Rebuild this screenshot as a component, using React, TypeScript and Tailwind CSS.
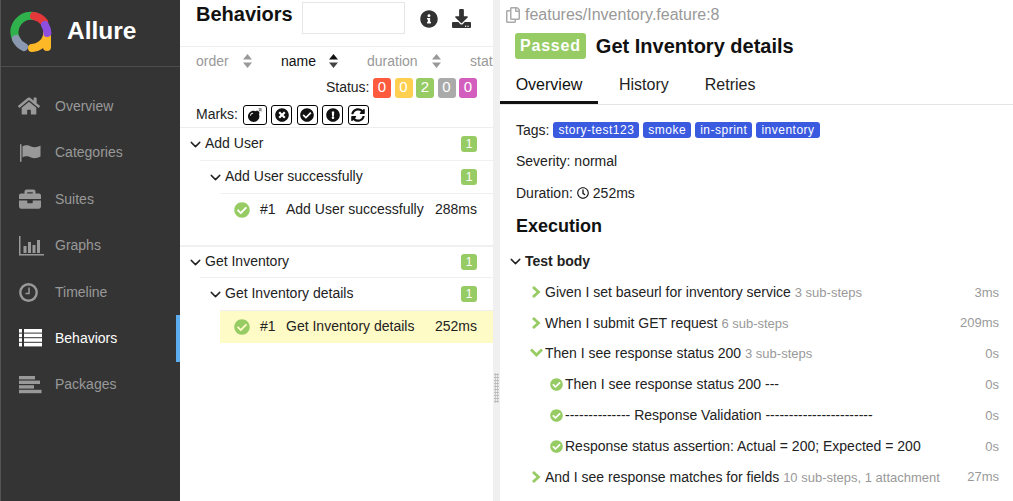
import React from 'react';
import {
  FaBomb,
  FaBriefcase,
  FaCheckCircle,
  FaDownload,
  FaExclamationCircle,
  FaHome,
  FaInfoCircle,
  FaRegClock,
  FaSyncAlt,
  FaTimesCircle,
  FaRegCopy,
} from 'react-icons/fa';
import { FiChevronDown } from 'react-icons/fi';

const FlagIcon = () => (
  <svg width="22" height="18" viewBox="0 0 22 18" fill="currentColor">
    <rect x="1" y="0" width="1.500" height="18" rx="0.7" />
    <path d="M3.500 2.500C7 0.500 9.500 1.500 12 2.500C15 3.500 18 3.500 21.500 1.500V12.500C18 14.500 15 14.500 12 13.500C9.500 12.500 7 11.500 3.500 13.500Z" />
  </svg>
);

const GraphIcon = () => (
  <svg width="25" height="20" viewBox="0 0 25 20" fill="currentColor">
    <rect x="0" y="0" width="1.500" height="19" />
    <rect x="0" y="18" width="25" height="1.500" />
    <rect x="4.500" y="10" width="3" height="7" />
    <rect x="9" y="6" width="3" height="11" />
    <rect x="13.500" y="9" width="3" height="8" />
    <rect x="18" y="4" width="3" height="13" />
  </svg>
);

const ClockIcon = () => (
  <svg width="19" height="19" viewBox="0 0 19 19" fill="none" stroke="currentColor">
    <circle cx="9.500" cy="9.500" r="8.200" strokeWidth="2.400" />
    <path d="M10 4.500V10.500H6.500" strokeWidth="1.500" />
  </svg>
);

const ListIcon = () => (
  <svg width="23" height="18" viewBox="0 0 23 18" fill="currentColor">
    {[0, 4.6, 9.2, 13.8].map((y) => (
      <g key={y}>
        <rect x="0" y={y} width="3" height="3.600" />
        <rect x="5" y={y} width="18" height="3.600" />
      </g>
    ))}
  </svg>
);

const PackagesIcon = () => (
  <svg width="23" height="18" viewBox="0 0 23 18" fill="currentColor">
    <rect x="0" y="0" width="16" height="3.400" />
    <rect x="0" y="4.600" width="21" height="3.400" />
    <rect x="0" y="9.200" width="15" height="3.400" />
    <rect x="0" y="13.800" width="22.500" height="3.400" />
  </svg>
);

const HomeIcon = () => <FaHome className="ml-[-1px] text-[22px]" />;
const SuitesIcon = () => <FaBriefcase className="text-[22px]" />;

const navItems = [
  { label: 'Overview', icon: HomeIcon },
  { label: 'Categories', icon: FlagIcon },
  { label: 'Suites', icon: SuitesIcon },
  { label: 'Graphs', icon: GraphIcon },
  { label: 'Timeline', icon: ClockIcon },
  { label: 'Behaviors', icon: ListIcon, active: true },
  { label: 'Packages', icon: PackagesIcon },
];

const Logo = () => (
  <svg width="42" height="42" viewBox="0 0 42 42" fill="none" strokeWidth="8" strokeLinecap="round">
    <path d="M24 5A16.500 16.500 0 0 0 6 28" stroke="#2fb24c" />
    <path d="M24 5A16.500 16.500 0 0 1 34 11" stroke="#e5383b" />
    <path d="M6 28A16.500 16.500 0 0 0 14 36" stroke="#8a99b0" />
    <path d="M37 23V36" stroke="#fdb827" />
    <path d="M37 25A16.500 16.500 0 0 1 22 37" stroke="#fdb827" />
    <path d="M35 14A16.500 16.500 0 0 1 37.400 22" stroke="#8e4fe0" />
  </svg>
);

const Sort = ({ active }: { active?: boolean }) => (
  <svg width="9" height="14" viewBox="0 0 9 14" className="shrink-0">
    <path d="M4.500 0L9 5.500H0Z" fill={active ? '#111' : '#999'} />
    <path d="M4.500 14L9 8.500H0Z" fill={active ? '#444' : '#999'} />
  </svg>
);

const Count = ({ n, color }: { n: number; color: string }) => (
  <span className={`flex h-5 w-[18px] items-center justify-center rounded-[3px] text-[15px] text-white ${color}`}>{n}</span>
);

const Mark = ({ children, wide }: { children: React.ReactNode; wide?: boolean }) => (
  <span
    className={`flex h-[20px] items-center justify-center rounded-[3px] border border-black text-[14px] text-[#111] ${
      wide ? 'w-[24px]' : 'w-[21px]'
    }`}
  >
    {children}
  </span>
);

const TreeRow = ({ label, height }: { label: string; height: string }) => (
  <div className={`flex items-center pl-[11px] pr-[16px] ${height}`}>
    <FiChevronDown className="ml-[-4px] mr-[1px] text-[17px] text-[#222]" />
    <span className="mb-[2px] flex-1">{label}</span>
    <span className="flex h-[16px] w-[16px] items-center justify-center rounded-[3px] bg-[#97cc64] text-[12px] text-white">1</span>
  </div>
);

const LeafRow = ({ name, time, selected }: { name: string; time: string; selected?: boolean }) => (
  <div className={`ml-[40px] flex h-[32px] items-center pr-[16px] ${selected ? 'bg-[#fffbc7]' : ''}`}>
    <FaCheckCircle className="ml-[14px] text-[16px] text-[#97cc64]" />
    <span className="mb-[2px] ml-[10px] w-[26px]">#1</span>
    <span className="mb-[2px] flex-1">{name}</span>
    <span className="mb-[2px]">{time}</span>
  </div>
);

const Step = ({
  kind,
  label,
  meta,
  time,
}: {
  kind: 'closed' | 'open' | 'pass';
  label: string;
  meta?: string;
  time: string;
}) => (
  <div className={`flex h-[30.8px] items-center pr-[14px] ${kind === 'pass' ? 'pl-[50px]' : 'pl-[30px]'}`}>
    {kind === 'closed' && (
      <svg width="15" height="12" viewBox="0 0 15 12" fill="none" stroke="#97cc64" strokeWidth="2.800" className="shrink-0">
        <path d="M3 1L8.500 6L3 11" />
      </svg>
    )}
    {kind === 'open' && (
      <svg width="15" height="9" viewBox="0 0 15 9" fill="none" stroke="#97cc64" strokeWidth="2.800" className="mb-[3px] shrink-0">
        <path d="M1 1.500L6.500 7L12 1.500" />
      </svg>
    )}
    {kind === 'pass' && <FaCheckCircle className="mr-[2px] w-[13px] shrink-0 text-[13px] text-[#97cc64]" />}
    <span className="flex-1 whitespace-pre text-[#222]">
      {label} {meta && <span className="text-[13px] text-[#999]">{meta}</span>}
    </span>
    <span className="text-[13px] text-[#999]">{time}</span>
  </div>
);

export default function App() {
  return (
    <div className="flex h-[501px] w-[1013px] overflow-hidden bg-white font-['Liberation_Sans',Arial,sans-serif] text-[14px] text-[#222]">
      <aside className="w-[180px] shrink-0 border-l border-[#555] bg-[#343434]">
        <div className="flex h-[67px] items-center border-b border-[#4d4d4d] pb-[3px] pl-[9px]">
          <Logo />
          <span className="ml-[15px] text-[24.5px] font-bold text-white">Allure</span>
        </div>
        <nav className="pt-[16.3px]">
          {navItems.map(({ label, icon: Icon, active }) => (
            <div
              key={label}
              className={`flex h-[46.4px] items-center pl-[18px] ${
                active ? 'border-r-4 border-[#5badf0] text-white' : 'text-[#999]'
              }`}
            >
              <span className="flex w-[36px] shrink-0 items-center">
                <Icon />
              </span>
              <span className="text-[14px]">{label}</span>
            </div>
          ))}
        </nav>
      </aside>

      <section className="w-[313px] shrink-0 overflow-hidden">
        <div className="flex h-[47px] border-b border-[#eee] pl-[16px]">
          <h2 className="mt-[1px] w-[95px] shrink-0 text-[20px] font-bold leading-[26px] text-[#111]">Behaviors</h2>
          <div className="ml-[11px] mt-[2px] h-[32px] w-[103px] shrink-0 border border-[#e6e6e6]" />
          <FaInfoCircle className="ml-[15px] mt-[10px] shrink-0 text-[18px] text-[#333]" />
          <FaDownload className="ml-[14px] mt-[9px] shrink-0 text-[19px] text-[#333]" />
        </div>
        <div className="flex h-[27px] items-center overflow-hidden whitespace-nowrap pl-[16px] pt-[1px] text-[#999]">
          <span className="w-[47px] shrink-0">order</span>
          <Sort />
          <span className="ml-[29px] w-[48px] shrink-0 text-[#111]">name</span>
          <Sort active />
          <span className="ml-[29px] w-[65px] shrink-0">duration</span>
          <Sort />
          <span className="ml-[29px] shrink-0">status</span>
        </div>
        <div className="mt-[3px] flex items-center justify-end gap-[3.5px] pr-[16px]">
          <span>Status:</span>
          <Count n={0} color="bg-[#fd5a3e]" />
          <Count n={0} color="bg-[#ffd050]" />
          <Count n={2} color="bg-[#97cc64]" />
          <Count n={0} color="bg-[#aaaaaa]" />
          <Count n={0} color="bg-[#d35ebe]" />
        </div>
        <div className="mt-[5px] flex h-[23px] items-center gap-[4.5px] pl-[16px]">
          <span>Marks:</span>
          <Mark wide><FaBomb /></Mark>
          <Mark><FaTimesCircle /></Mark>
          <Mark><FaCheckCircle /></Mark>
          <Mark><FaExclamationCircle /></Mark>
          <Mark><FaSyncAlt /></Mark>
        </div>
        <div className="mt-[1px] border-t border-[#eee]">
          <TreeRow label="Add User" height="h-[32px]" />
          <div className="ml-[20px] border-t border-[#f0f0f0]">
            <TreeRow label="Add User successfully" height="h-[32px]" />
          </div>
          <div className="ml-[40px] border-t border-[#f0f0f0]" />
          <LeafRow name="Add User successfully" time="288ms" />
        </div>
        <div className="mt-[19px] border-t-2 border-[#f0f0f0]">
          <TreeRow label="Get Inventory" height="h-[30px]" />
          <div className="ml-[20px] border-t border-[#f0f0f0]">
            <TreeRow label="Get Inventory details" height="h-[32px]" />
          </div>
          <div className="ml-[40px] border-t border-[#f0f0f0]" />
          <LeafRow name="Get Inventory details" time="252ms" selected />
        </div>
      </section>

      <div className="flex w-[7px] shrink-0 items-center justify-center bg-[#f0f0f0] pt-[275px]">
        <div className="h-[30px] w-[5px] bg-[radial-gradient(#bbb_1px,transparent_1px)] bg-[length:2.5px_3px]" />
      </div>

      <main className="min-w-0 flex-1">
        <div className="flex h-[29px] items-center pl-[5px] text-[16px] text-[#999]">
          <FaRegCopy className="mr-[4px] text-[16px] text-[#aaa]" />
          features/Inventory.feature:8
        </div>
        <div className="mt-[2px] flex h-[30px] items-center pl-[15px]">
          <span className="rounded-[3px] bg-[#97cc64] px-[5px] py-[1px] text-[16px] font-bold tracking-[0.8px] text-white">Passed</span>
          <h1 className="ml-[10px] text-[20px] font-bold text-[#111]">Get Inventory details</h1>
        </div>
        <div className="mt-[8px] flex h-[36px] border-b border-[#e5e5e5] text-[16px]">
          <div className="flex w-[98px] items-center justify-center border-b-[3px] border-[#111] pb-[1px] text-[#111]">Overview</div>
          <div className="ml-[21px] flex items-center pb-[3px]">History</div>
          <div className="ml-[36px] flex items-center pb-[3px]">Retries</div>
        </div>
        <div className="mt-[9px] flex h-[32px] items-center pl-[16px]">
          <span className="mr-[4px]">Tags:</span>
          <div className="flex gap-[4px] text-[12px] leading-[16px] tracking-[0.5px] text-white">
            <span className="rounded-[3px] bg-[#3a5ae0] px-[5px]">story-test123</span>
            <span className="rounded-[3px] bg-[#3a5ae0] px-[5px]">smoke</span>
            <span className="rounded-[3px] bg-[#3a5ae0] px-[5px]">in-sprint</span>
            <span className="rounded-[3px] bg-[#3a5ae0] px-[5px]">inventory</span>
          </div>
        </div>
        <div className="flex h-[31px] items-center pl-[16px]">Severity: normal</div>
        <div className="flex h-[32px] items-center pl-[16px]">
          Duration:
          <FaRegClock className="mx-[4px] text-[12px] text-[#111]" />
          252ms
        </div>
        <h3 className="mt-[5px] pl-[16px] text-[18px] font-bold leading-[24px] text-[#111]">Execution</h3>
        <div className="mt-[11px] flex h-[25px] items-center pl-[7px] font-bold">
          <FiChevronDown className="mr-[1px] text-[17px]" />
          Test body
        </div>
        <div className="mt-[3px]">
          <Step kind="closed" label="Given I set baseurl for inventory service" meta="3 sub-steps" time="3ms" />
          <Step kind="closed" label="When I submit GET request" meta="6 sub-steps" time="209ms" />
          <Step kind="open" label="Then I see response status 200" meta="3 sub-steps" time="0s" />
          <Step kind="pass" label="Then I see response status 200 ---" time="0s" />
          <Step kind="pass" label="-------------- Response Validation -----------------------" time="0s" />
          <Step kind="pass" label="Response status assertion: Actual = 200; Expected = 200" time="0s" />
          <Step kind="closed" label="And I see response matches for fields" meta="10 sub-steps, 1 attachment" time="27ms" />
        </div>
      </main>
    </div>
  );
}
